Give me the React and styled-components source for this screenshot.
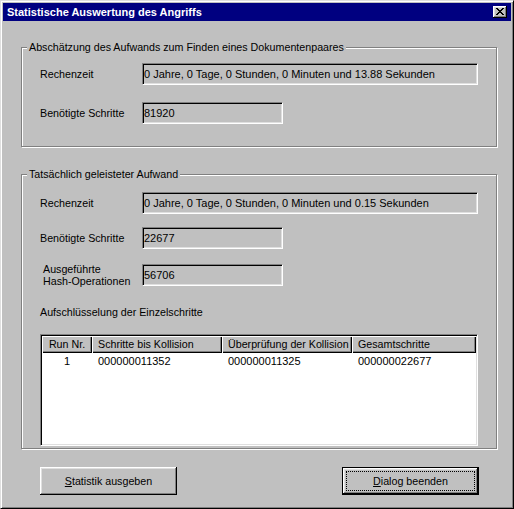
import React from "react";
import styled, { createGlobalStyle } from "styled-components";

const Global = createGlobalStyle`
  html, body { margin: 0; padding: 0; background: #c0c0c0; }
  body { font-family: "Liberation Sans", Arial, sans-serif; font-size: 11px; }
`;

const Window = styled.div`
  box-sizing: border-box;
  width: 514px;
  height: 509px;
  background: #c0c0c0;
  border: 1px solid;
  border-color: #dfdfdf #000 #000 #dfdfdf;
  box-shadow: inset 1px 1px #fff, inset -1px -1px #808080;
  padding: 2px;
  display: flex;
  flex-direction: column;
  font: 10.7px "Liberation Sans", Arial, sans-serif;
  color: #000;
`;

const TitleBar = styled.div`
  height: 18px;
  flex: none;
  background: #000080;
  display: flex;
  align-items: center;
  justify-content: space-between;
  padding: 0 4px 0 4px;
`;

const TitleText = styled.span`
  color: #fff;
  font-weight: bold;
  font-size: 11px;
  line-height: 13px;
  white-space: nowrap;
`;

const CloseButton = styled.div`
  width: 14px;
  height: 12px;
  background: #c0c0c0;
  box-shadow: inset -1px -1px #000, inset 1px 1px #fff, inset -2px -2px #808080,
    inset 2px 2px #dfdfdf;
  display: flex;
  align-items: center;
  justify-content: center;
  svg { display: block; margin-left: -1px; margin-top: -1px; }
`;

const Content = styled.div`
  display: flex;
  flex-direction: column;
  padding: 26px 14px 0 18px;
`;

const GroupBox = styled.div`
  display: flex;
  flex-direction: column;
  border: 1px solid #808080;
  box-shadow: inset 1px 1px #fff, 1px 1px #fff;
  padding: 0 0 ${(p) => p.$pb}px 18px;
  margin-top: ${(p) => p.$mt || 0}px;
`;

const GroupTitle = styled.div`
  align-self: flex-start;
  margin: -7px 0 ${(p) => p.$mb}px -13px;
  padding: 0 2px;
  background: #c0c0c0;
  line-height: 13px;
  white-space: nowrap;
`;

const Row = styled.div`
  display: grid;
  grid-template-columns: 102px auto;
  align-items: center;
  height: 22px;
  margin-top: ${(p) => p.$mt || 0}px;
`;

const Label = styled.div`
  line-height: ${(p) => (p.$two ? 12 : 13)}px;
  padding-left: ${(p) => (p.$two ? 3 : 0)}px;
  white-space: nowrap;
`;

const Field = styled.div`
  box-sizing: border-box;
  width: ${(p) => p.$w}px;
  height: 22px;
  border: 1px solid;
  border-color: #808080 #fff #fff #808080;
  box-shadow: inset 1px 1px #000, inset -1px -1px #dfdfdf;
  background: #c0c0c0;
  padding: 0 1px;
  display: flex;
  align-items: center;
  line-height: 13px;
  white-space: nowrap;
  font-size: 11px;
`;

const SectionLabel = styled.div`
  line-height: 13px;
  margin-top: 21px;
`;

const ListView = styled.div`
  box-sizing: border-box;
  width: 438px;
  height: 112px;
  margin-top: 15px;
  border: 1px solid;
  border-color: #808080 #fff #fff #808080;
  box-shadow: inset 1px 1px #000, inset -1px -1px #dfdfdf;
  background: #fff;
  padding: 1px;
  display: flex;
  flex-direction: column;
`;

const Columns = styled.div`
  display: grid;
  grid-template-columns: 50px 130px 130px 1fr;
`;

const Header = styled(Columns)`
  height: 17px;
`;

const HeaderCell = styled.div`
  background: #c0c0c0;
  box-shadow: inset 1px 1px #fff, inset -1px -1px #000, inset -2px -2px #808080;
  display: flex;
  align-items: center;
  justify-content: ${(p) => (p.$center ? "center" : "flex-start")};
  padding-left: ${(p) => (p.$center ? 0 : 6)}px;
  line-height: 13px;
  white-space: nowrap;
  overflow: hidden;
`;

const DataRow = styled(Columns)`
  margin-top: 2px;
  line-height: 13px;
  font-size: 11px;
`;

const Cell = styled.div`
  text-align: ${(p) => (p.$center ? "center" : "left")};
  padding-left: ${(p) => (p.$center ? 0 : 6)}px;
  white-space: nowrap;
`;

const ButtonRow = styled.div`
  display: flex;
  justify-content: space-between;
  margin-top: 18px;
  padding: 0 18px 0 19px;
`;

const PushButton = styled.div`
  box-sizing: border-box;
  width: 137px;
  height: 28px;
  background: #c0c0c0;
  border: ${(p) => (p.$default ? "1px solid #000" : "none")};
  box-shadow: inset -1px -1px #000, inset 1px 1px #fff, inset -2px -2px #808080,
    inset 2px 2px #dfdfdf;
  display: flex;
  padding: ${(p) => (p.$default ? 3 : 4)}px;
`;

const ButtonFace = styled.span`
  flex: 1;
  display: flex;
  align-items: center;
  justify-content: center;
  border: 1px dotted ${(p) => (p.$focus ? "#000" : "transparent")};
  line-height: 13px;
  white-space: nowrap;
  u { text-decoration: underline; text-underline-offset: 1px; }
`;

const CloseGlyph = () => (
  <svg width="8" height="7" viewBox="0 0 8 7" shapeRendering="crispEdges">
    <path
      fill="#000"
      d="M0 0h2v1H0zM6 0h2v1H6zM1 1h2v1H1zM5 1h2v1H5zM2 2h4v1H2zM3 3h2v1H3zM2 4h4v1H2zM1 5h2v1H1zM5 5h2v1H5zM0 6h2v1H0zM6 6h2v1H6z"
    />
  </svg>
);

export default function App() {
  return (
    <>
      <Global />
      <Window>
        <TitleBar>
          <TitleText>Statistische Auswertung des Angriffs</TitleText>
          <CloseButton>
            <CloseGlyph />
          </CloseButton>
        </TitleBar>
        <Content>
          <GroupBox $pb={22}>
            <GroupTitle $mb={9}>
              Abschätzung des Aufwands zum Finden eines Dokumentenpaares
            </GroupTitle>
            <Row>
              <Label>Rechenzeit</Label>
              <Field $w={336}>
                0 Jahre, 0 Tage, 0 Stunden, 0 Minuten und 13.88 Sekunden
              </Field>
            </Row>
            <Row $mt={17}>
              <Label>Benötigte Schritte</Label>
              <Field $w={141}>81920</Field>
            </Row>
          </GroupBox>

          <GroupBox $pb={2} $mt={27}>
            <GroupTitle $mb={11}>Tatsächlich geleisteter Aufwand</GroupTitle>
            <Row>
              <Label>Rechenzeit</Label>
              <Field $w={336}>
                0 Jahre, 0 Tage, 0 Stunden, 0 Minuten und 0.15 Sekunden
              </Field>
            </Row>
            <Row $mt={13}>
              <Label>Benötigte Schritte</Label>
              <Field $w={141}>22677</Field>
            </Row>
            <Row $mt={14}>
              <Label $two>
                Ausgeführte
                <br />
                Hash-Operationen
              </Label>
              <Field $w={141}>56706</Field>
            </Row>
            <SectionLabel>Aufschlüsselung der Einzelschritte</SectionLabel>
            <ListView>
              <Header>
                <HeaderCell $center>Run Nr.</HeaderCell>
                <HeaderCell>Schritte bis Kollision</HeaderCell>
                <HeaderCell>Überprüfung der Kollision</HeaderCell>
                <HeaderCell>Gesamtschritte</HeaderCell>
              </Header>
              <DataRow>
                <Cell $center>1</Cell>
                <Cell>000000011352</Cell>
                <Cell>000000011325</Cell>
                <Cell>000000022677</Cell>
              </DataRow>
            </ListView>
          </GroupBox>

          <ButtonRow>
            <PushButton>
              <ButtonFace>
                <span>
                  <u>S</u>tatistik ausgeben
                </span>
              </ButtonFace>
            </PushButton>
            <PushButton $default>
              <ButtonFace $focus>
                <span>
                  <u>D</u>ialog beenden
                </span>
              </ButtonFace>
            </PushButton>
          </ButtonRow>
        </Content>
      </Window>
    </>
  );
}
